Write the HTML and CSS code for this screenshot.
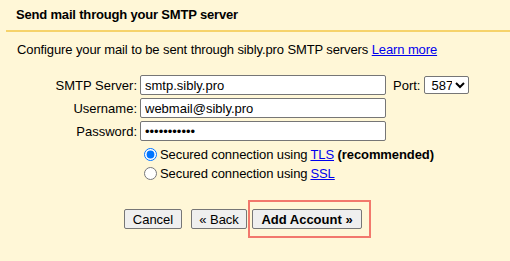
FILE: index.html
```html
<!DOCTYPE html>
<html>
<head>
<meta charset="utf-8">
<link rel="stylesheet" href="styles.css">
</head>
<body>
<div class="dialog">
  <div class="head"><h1 class="title">Send mail through your SMTP server</h1></div>
  <p class="intro">Configure your mail to be sent through sibly.pro SMTP servers <a href="#" class="link">Learn more</a></p>
  <div class="form">
    <label class="lbl">SMTP Server:</label>
    <input class="field" type="text" value="smtp.sibly.pro">
    <span class="port-lbl">Port:</span>
    <select class="port"><option>587</option><option>465</option></select>

    <label class="lbl">Username:</label>
    <input class="field" type="text" value="webmail@sibly.pro">
    <span></span><span></span>

    <label class="lbl">Password:</label>
    <input class="field" type="password" value="webmailpass">
    <span></span><span></span>
  </div>
  <div class="radios">
    <label class="radio-row"><input type="radio" name="sec" class="radio" checked>Secured connection using <a href="#" class="link">TLS</a>&nbsp;<b>(recommended)</b></label>
    <label class="radio-row"><input type="radio" name="sec" class="radio">Secured connection using <a href="#" class="link">SSL</a></label>
  </div>
  <div class="actions">
    <button class="btn btn-cancel">Cancel</button>
    <button class="btn btn-back">« Back</button>
    <span class="highlight"><button class="btn btn-primary">Add Account »</button></span>
  </div>
</div>
</body>
</html>
```
FILE: styles.css
```css
html, body {
  margin: 0;
  padding: 0;
  background: #fff7d7;
}
body {
  font-family: "Liberation Sans", Arial, sans-serif;
  font-size: 13px;
  color: #000;
  width: 510px;
  height: 261px;
  overflow: hidden;
}
.head {
  margin-left: 6px;
  border-bottom: 2px solid #f6d36b;
  padding: 7px 0 7px 10px;
}
.title {
  margin: 0;
  font-size: 13px;
  letter-spacing: -0.18px;
  font-weight: bold;
  line-height: 16px;
}
.intro {
  margin: 10px 0 0 17px;
  line-height: 15px;
  letter-spacing: -0.11px;
}
.link {
  color: #0000ee;
  text-decoration: underline;
}
.form {
  display: grid;
  grid-template-columns: 137px 246px max-content max-content;
  column-gap: 3px;
  row-gap: 3px;
  margin-top: 18px;
  align-items: center;
}
.lbl {
  text-align: right;
}
.field {
  box-sizing: border-box;
  width: 246px;
  height: 20px;
  margin: 0;
  padding: 1px 4px 0;
  border: 1px solid #767676;
  border-radius: 2px;
  background: #fff;
  font-family: "Liberation Sans", Arial, sans-serif;
  font-size: 13px;
  color: #000;
}
.port-lbl {
  margin-left: 4px;
}
.port {
  box-sizing: border-box;
  height: 18px;
  width: 45px;
  margin: 0 0 0 1px;
  font-family: "Liberation Sans", Arial, sans-serif;
  font-size: 13px;
  border: 1px solid #767676;
  border-radius: 2px;
  background: #fff;
  padding: 0 0 0 2px;
}
.radios {
  display: flex;
  flex-direction: column;
  gap: 4px;
  margin: 6px 0 0 140px;
  letter-spacing: -0.09px;
}
.radio-row {
  display: flex;
  align-items: center;
  white-space: nowrap;
  line-height: 15px;
}
.radio-row .link {
  margin-left: 3px;
}
.radio {
  width: 13px;
  height: 13px;
  margin: 0 3px 0 4px;
}
.actions {
  display: flex;
  align-items: center;
  margin: 28px 0 0 124px;
}
.btn {
  box-sizing: border-box;
  height: 20px;
  margin: 0;
  padding: 0 6px;
  border: 1px solid #767676;
  border-radius: 2px;
  background: #efefef;
  font-family: "Liberation Sans", Arial, sans-serif;
  font-size: 13px;
  color: #000;
}
.btn-cancel {
  width: 58px;
  margin-right: 9px;
}
.btn-back {
  width: 56px;
  margin-right: 5px;
}
.btn-primary {
  width: 110px;
  font-weight: bold;
}
.highlight {
  position: relative;
  display: inline-flex;
}
.highlight::after {
  content: "";
  position: absolute;
  left: -4px;
  top: -9px;
  right: -9px;
  bottom: -9px;
  border: 2px solid #f2786c;
  pointer-events: none;
}
```
